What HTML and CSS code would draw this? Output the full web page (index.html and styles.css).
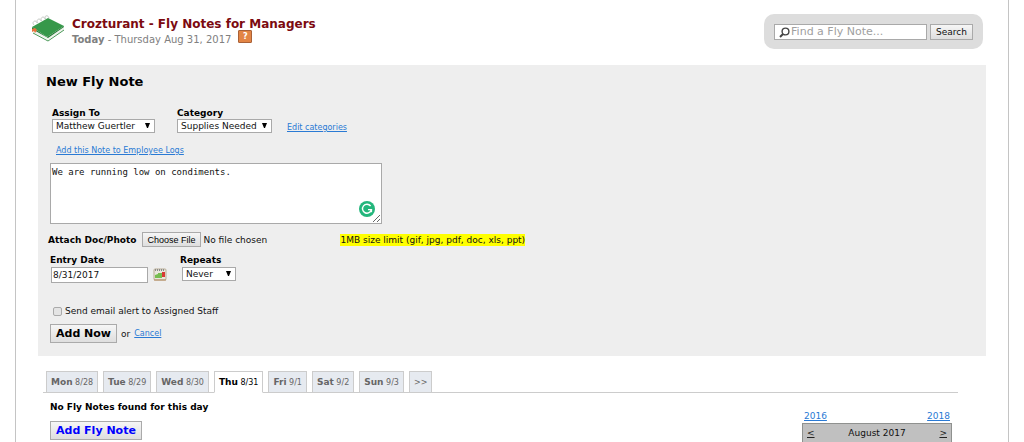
FILE: index.html
```html
<!DOCTYPE html>
<html lang="en">

<head>
  <meta charset="utf-8">
  <title>Fly Notes for Managers</title>
  <meta name="viewport" content="width=device-width, initial-scale=1">
  <link rel="stylesheet" href="styles.css">
</head>

<body>
  <div class="page">

    <!-- Header -->
    <div class="header">
      <svg class="logo" viewBox="0 0 34 28" width="34" height="28">
        <path d="M1 14 L16 24 L33 13 L33 16 L17 26 L2 18 Z" fill="#eef2ec"/>
        <path d="M2 19 L17 27 L33 16" fill="none" stroke="#4b9a59" stroke-width="1"/>
        <path d="M1 13 L16 23 L33 12 L33 13 L17 24 L1 15 Z" fill="#277a38"/>
        <path d="M1 13 L17 4 L33 12 L16 23 Z" fill="#36984a"/>
        <g fill="none" stroke="#c3c7c3" stroke-width="1">
          <path d="M3 11 C0 8 5 5 6 9"/>
          <path d="M7 9 C4 6 9 3 10 7"/>
          <path d="M11 7 C8 4 13 1 14 5"/>
          <path d="M15 5 C12 2 17 0 18 4"/>
        </g>
        <path d="M1 15 L4 14 L6 16 L4 19 L3 17 L1 18 Z" fill="#e8743b"/>
      </svg>
      <div class="heading">
        <h1>Crozturant - Fly Notes for Managers</h1>
        <div class="today">
          <span><b>Today</b> - Thursday Aug 31, 2017</span>
          <button class="help" type="button">?</button>
        </div>
      </div>
      <form class="search">
        <label class="search-box">
          <svg viewBox="0 0 11 11" width="11" height="11" fill="none" stroke="#444">
            <circle cx="6.5" cy="4.5" r="3.4" stroke-width="1.4"/>
            <path d="M4 7 L1 10" stroke-width="2"/>
          </svg>
          <input type="text" placeholder="Find a Fly Note..." aria-label="Find a Fly Note">
        </label>
        <button class="button" type="button">Search</button>
      </form>
    </div>

    <!-- New note form -->
    <form class="panel">
      <h2>New Fly Note</h2>

      <div class="row assign-row">
        <div class="field assign">
          <label for="assign">Assign To</label>
          <select id="assign">
            <option>Matthew Guertler</option>
          </select>
        </div>
        <div class="field category">
          <label for="category">Category</label>
          <select id="category">
            <option>Supplies Needed</option>
          </select>
        </div>
        <a href="#">Edit categories</a>
      </div>

      <div class="logs"><a href="#">Add this Note to Employee Logs</a></div>

      <div class="note">
        <textarea aria-label="Note">We are running low on condiments.</textarea>
        <svg class="checker" viewBox="0 0 16 16" width="16" height="16">
          <circle cx="8" cy="8" r="8" fill="#24b67c"/>
          <path d="M11.6 5 A4.5 4.5 0 1 0 12.4 8.6 H9" fill="none" stroke="#fff" stroke-width="1.4"/>
          <path d="M12.4 8.4 V11.2" stroke="#fff" stroke-width="1.4"/>
        </svg>
      </div>

      <div class="row attach-row">
        <label for="doc">Attach Doc/Photo</label>
        <input type="file" id="doc">
        <mark>1MB size limit (gif, jpg, pdf, doc, xls, ppt)</mark>
      </div>

      <div class="row date-row">
        <div class="field date">
          <label for="date">Entry Date</label>
          <div class="date-box">
            <input type="text" id="date" value="8/31/2017">
            <svg viewBox="0 0 14 14" width="14" height="14">
              <rect x="1" y="1" width="12" height="11" rx="1" fill="#e9e6dc" stroke="#b9ad95"/>
              <path d="M2 2 H12" stroke="#8a8a8a" stroke-width="2" stroke-dasharray="1 1"/>
              <path d="M2 7 L5 6 V5 H9 V10 H2 Z" fill="#76bd50"/>
              <rect x="9" y="4" width="3" height="5" fill="#d83a34"/>
              <path d="M1 12 H13" stroke="#b58a5c" stroke-width="1"/>
            </svg>
          </div>
        </div>
        <div class="field repeats">
          <label for="repeats">Repeats</label>
          <select id="repeats">
            <option>Never</option>
          </select>
        </div>
      </div>

      <div class="row alert-row">
        <input type="checkbox" id="alert">
        <label for="alert">Send email alert to Assigned Staff</label>
      </div>

      <div class="row submit-row">
        <button class="button big" type="button">Add Now</button>
        <span>or</span>
        <a href="#">Cancel</a>
      </div>
    </form>

    <!-- Days of the week -->
    <nav class="tabs">
      <a class="tab" href="#"><b>Mon</b> 8/28</a>
      <a class="tab" href="#"><b>Tue</b> 8/29</a>
      <a class="tab" href="#"><b>Wed</b> 8/30</a>
      <a class="tab active" href="#"><b>Thu</b> 8/31</a>
      <a class="tab" href="#"><b>Fri</b> 9/1</a>
      <a class="tab" href="#"><b>Sat</b> 9/2</a>
      <a class="tab" href="#"><b>Sun</b> 9/3</a>
      <a class="tab" href="#">&gt;&gt;</a>
    </nav>

    <div class="content">
      <div class="notes">
        <p>No Fly Notes found for this day</p>
        <button class="button big add" type="button">Add Fly Note</button>
      </div>
      <div class="calendar">
        <div class="years">
          <a href="#">2016</a>
          <a href="#">2018</a>
        </div>
        <div class="month">
          <a href="#">&lt;</a>
          <span>August 2017</span>
          <a href="#">&gt;</a>
        </div>
      </div>
    </div>

  </div>
</body>

</html>
```
FILE: styles.css
```css
* {
  box-sizing: border-box;
}

body {
  margin: 0;
  background-color: white;
  color: #111;
  font-family: "DejaVu Sans", Verdana, sans-serif;
  font-size: 9px;
  line-height: 12px;
}

.page {
  min-height: 100vh;
  margin: 0 15px;
  border: solid #c4c4c4;
  border-width: 0 1px;
}

h1,
h2,
p {
  margin: 0;
}

a {
  color: #2a7ad4;
  font-size: 8px;
}

input,
select,
textarea,
button {
  margin: 0;
  color: #111;
  font-family: inherit;
  font-size: 9px;
}

.button {
  height: 16px;
  padding: 0 5px;
  border: 1px solid #aaa;
  background: linear-gradient(#f6f6f6, #dedede);
  line-height: 12px;
}

.big {
  height: 19px;
  color: black;
  font-size: 11px;
  font-weight: bold;
}

/* Header */
.header {
  display: flex;
  align-items: flex-start;
  height: 65px;
  padding: 14px 25px 0 15px;
}

.logo {
  margin-right: 7px;
}

.heading {
  flex: 1;
  padding-top: 2px;
}

h1 {
  color: #7c0a10;
  font-size: 12px;
  line-height: 16px;
}

.today {
  display: flex;
  gap: 7px;
  color: #808080;
  font-size: 10px;
  line-height: 15px;
}

.help {
  width: 14px;
  height: 13px;
  margin-top: -2px;
  padding: 0;
  border: 1px solid #a96137;
  border-radius: 1px;
  background-color: #e38545;
  color: white;
  font-size: 8px;
  font-weight: bold;
  line-height: 10px;
}

.search {
  display: flex;
  gap: 3px;
  padding: 10px 10px 9px;
  border-radius: 10px;
  background-color: #ddd;
}

.search-box {
  display: flex;
  align-items: center;
  width: 153px;
  height: 16px;
  padding-left: 4px;
  border: 1px solid #a9a9a9;
  background-color: white;
}

.search-box input {
  flex: 1;
  min-width: 0;
  padding: 0 1px;
  border: none;
  font-size: 11px;
  line-height: 14px;
}

.search-box input::placeholder {
  color: #a0a0a0;
}

/* New note form */
.panel {
  margin: 0 22px;
  padding: 10px 8px 13px 12px;
  background-color: #eee;
}

h2 {
  margin-left: -4px;
  color: black;
  font-size: 13px;
  line-height: 14px;
}

.row {
  display: flex;
  align-items: center;
}

.field label,
.attach-row label {
  display: block;
  color: black;
  font-weight: bold;
}

select {
  appearance: none;
  width: 100%;
  height: 14px;
  padding: 0 3px;
  border: 1px solid #a9a9a9;
  border-radius: 0;
  background: white url("data:image/svg+xml,%3Csvg xmlns='http://www.w3.org/2000/svg' width='5' height='5'%3E%3Cpath d='M0 0H5L3 5H2Z'/%3E%3C/svg%3E") no-repeat right 4px top 3px;
}

.assign-row {
  align-items: flex-end;
  margin-top: 18px;
  padding-left: 2px;
}

.assign {
  width: 103px;
  margin-right: 22px;
}

.category {
  width: 95px;
  margin-right: 15px;
}

.assign-row a {
  line-height: 10px;
}

.logs {
  margin-top: 11px;
  padding-left: 6px;
}

.note {
  position: relative;
  width: 332px;
  margin-top: 6px;
}

textarea {
  display: block;
  width: 100%;
  height: 61px;
  padding: 2px 1px;
  border: 1px solid #a9a9a9;
  font-family: "DejaVu Sans Mono", monospace;
  line-height: 12px;
}

.checker {
  position: absolute;
  right: 7px;
  bottom: 7px;
}

.attach-row {
  margin: 8px 0 0 -2px;
}

.attach-row input {
  width: 198px;
  margin-left: 6px;
}

.attach-row input::file-selector-button {
  height: 15px;
  margin: 0 3px 0 0;
  padding: 0 4px;
  border: 1px solid #aaa;
  background: linear-gradient(#f6f6f6, #dedede);
  font-family: "Liberation Sans", Arial, sans-serif;
  font-size: 9px;
}

mark {
  background-color: #ff0;
  color: #111;
}

.date-row {
  align-items: flex-start;
  margin-top: 7px;
}

.date {
  width: 130px;
}

.date-box {
  display: flex;
  align-items: center;
  gap: 5px;
  padding: 1px 0 0 1px;
}

.date-box input {
  width: 97px;
  height: 16px;
  padding: 0 1px;
  border: 1px solid #a9a9a9;
}

.repeats select {
  width: 54px;
  margin: 1px 0 0 2px;
}

.alert-row {
  gap: 3px;
  margin-top: 22px;
  padding-left: 3px;
}

.alert-row input {
  appearance: none;
  width: 9px;
  height: 9px;
  border: 1px solid #aaa;
  border-radius: 2px;
  background-color: #e4e4e4;
}

.submit-row {
  gap: 4px;
  margin-top: 7px;
}

/* Days of the week */
.tabs {
  display: flex;
  gap: 5px;
  margin: 15px 50px 0 27px;
  padding-left: 3px;
  border-bottom: 1px solid #ccc;
}

.tab {
  height: 22px;
  margin-bottom: -1px;
  padding: 0 4px;
  border: 1px solid #ccc;
  background-color: #e6eaf0;
  color: #666;
  line-height: 21px;
  text-decoration: none;
}

.tab b {
  font-size: 9px;
}

.active {
  border-bottom-color: white;
  background-color: white;
  color: black;
}

.content {
  display: flex;
  justify-content: space-between;
  padding: 8px 56px 0 34px;
}

.notes p {
  color: black;
  font-weight: bold;
}

.add {
  margin-top: 8px;
  color: blue;
}

.calendar {
  width: 150px;
  margin-top: 9px;
}

.years {
  display: flex;
  justify-content: space-between;
  padding: 0 2px;
}

.years a {
  font-size: 9px;
}

.month {
  display: flex;
  justify-content: space-between;
  margin-top: 1px;
  padding: 3px 4px;
  border: 1px solid #8f918f;
  background-color: #c0c0c0;
}

.month a {
  color: #222;
  font-size: 9px;
}
```
